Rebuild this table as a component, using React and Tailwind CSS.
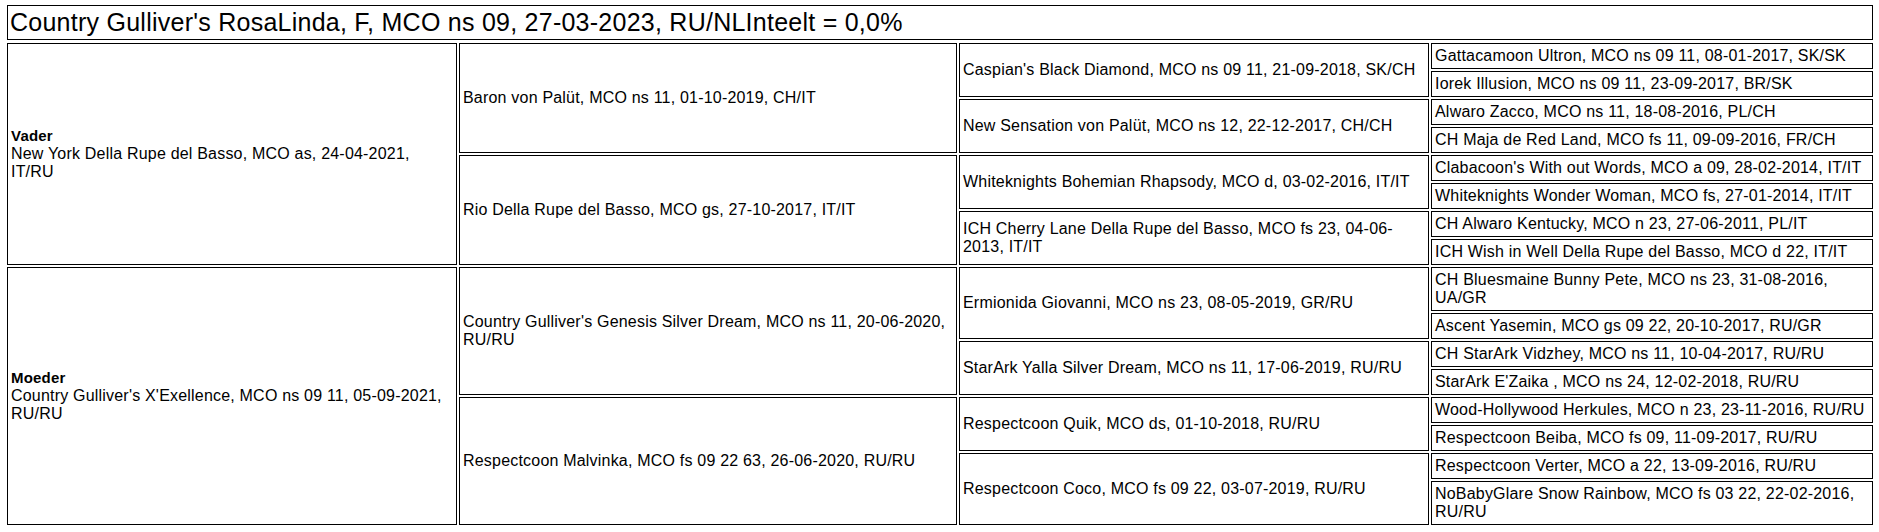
import React from 'react';

// Pedigree: 4 generations, each node = [name, sire, dam]
const pedigree = {
  sire: {
    label: 'Vader',
    name: ['New York Della Rupe del Basso, MCO as, 24-04-2021,', 'IT/RU'],
    sire: {
      name: ['Baron von Palüt, MCO ns 11, 01-10-2019, CH/IT'],
      sire: {
        name: ["Caspian's Black Diamond, MCO ns 09 11, 21-09-2018, SK/CH"],
        sire: ['Gattacamoon Ultron, MCO ns 09 11, 08-01-2017, SK/SK'],
        dam: ['Iorek Illusion, MCO ns 09 11, 23-09-2017, BR/SK'],
      },
      dam: {
        name: ['New Sensation von Palüt, MCO ns 12, 22-12-2017, CH/CH'],
        sire: ['Alwaro Zacco, MCO ns 11, 18-08-2016, PL/CH'],
        dam: ['CH Maja de Red Land, MCO fs 11, 09-09-2016, FR/CH'],
      },
    },
    dam: {
      name: ['Rio Della Rupe del Basso, MCO gs, 27-10-2017, IT/IT'],
      sire: {
        name: ['Whiteknights Bohemian Rhapsody, MCO d, 03-02-2016, IT/IT'],
        sire: ["Clabacoon's With out Words, MCO a 09, 28-02-2014, IT/IT"],
        dam: ['Whiteknights Wonder Woman, MCO fs, 27-01-2014, IT/IT'],
      },
      dam: {
        name: ['ICH Cherry Lane Della Rupe del Basso, MCO fs 23, 04-06-', '2013, IT/IT'],
        sire: ['CH Alwaro Kentucky, MCO n 23, 27-06-2011, PL/IT'],
        dam: ['ICH Wish in Well Della Rupe del Basso, MCO d 22, IT/IT'],
      },
    },
  },
  dam: {
    label: 'Moeder',
    name: ["Country Gulliver's X'Exellence, MCO ns 09 11, 05-09-2021,", 'RU/RU'],
    sire: {
      name: ["Country Gulliver's Genesis Silver Dream, MCO ns 11, 20-06-2020,", 'RU/RU'],
      sire: {
        name: ['Ermionida Giovanni, MCO ns 23, 08-05-2019, GR/RU'],
        sire: ['CH Bluesmaine Bunny Pete, MCO ns 23, 31-08-2016,', 'UA/GR'],
        dam: ['Ascent Yasemin, MCO gs 09 22, 20-10-2017, RU/GR'],
      },
      dam: {
        name: ['StarArk Yalla Silver Dream, MCO ns 11, 17-06-2019, RU/RU'],
        sire: ['CH StarArk Vidzhey, MCO ns 11, 10-04-2017, RU/RU'],
        dam: ["StarArk E'Zaika , MCO ns 24, 12-02-2018, RU/RU"],
      },
    },
    dam: {
      name: ['Respectcoon Malvinka, MCO fs 09 22 63, 26-06-2020, RU/RU'],
      sire: {
        name: ['Respectcoon Quik, MCO ds, 01-10-2018, RU/RU'],
        sire: ['Wood-Hollywood Herkules, MCO n 23, 23-11-2016, RU/RU'],
        dam: ['Respectcoon Beiba, MCO fs 09, 11-09-2017, RU/RU'],
      },
      dam: {
        name: ['Respectcoon Coco, MCO fs 09 22, 03-07-2019, RU/RU'],
        sire: ['Respectcoon Verter, MCO a 22, 13-09-2016, RU/RU'],
        dam: ['NoBabyGlare Snow Rainbow, MCO fs 03 22, 22-02-2016,', 'RU/RU'],
      },
    },
  },
};

const widths = ['w-[450px]', 'w-[498px]', 'w-[470px]', 'w-[442px]'];

function Lines({ lines }) {
  return lines.map((l, i) => (
    <div key={i} className="whitespace-nowrap">{l}</div>
  ));
}

function Cell({ className, children }) {
  return (
    <div className={`border border-black p-[3px] flex items-center shrink-0 ${className}`}>
      <div>{children}</div>
    </div>
  );
}

function Node({ node, level }) {
  if (Array.isArray(node)) {
    return (
      <Cell className={widths[level]}>
        <Lines lines={node} />
      </Cell>
    );
  }
  return (
    <div className="flex gap-[2px]">
      <Cell className={widths[level]}>
        {node.label && <div className="font-bold text-[15px]">{node.label}</div>}
        <Lines lines={node.name} />
      </Cell>
      <div className="flex flex-col gap-[2px]">
        <Node node={node.sire} level={level + 1} />
        <Node node={node.dam} level={level + 1} />
      </div>
    </div>
  );
}

export default function App() {
  return (
    <div
      className="bg-white min-h-[532px] pt-[5px] pl-[7px] pr-[6px] text-black text-[16px] leading-[18px] tracking-[0.2px]"
      style={{ fontFamily: '"Liberation Sans", Arial, sans-serif' }}
    >
      <div className="w-[1866px] flex flex-col gap-[3px]">
        <div className="border border-black px-[2px] py-[3px] text-[25px] leading-[27px] tracking-[0.25px] whitespace-nowrap">
          Country Gulliver's RosaLinda, F, MCO ns 09, 27-03-2023, RU/NLInteelt = 0,0%
        </div>
        <div className="flex flex-col gap-[2px]">
          <Node node={pedigree.sire} level={0} />
          <Node node={pedigree.dam} level={0} />
        </div>
      </div>
    </div>
  );
}
